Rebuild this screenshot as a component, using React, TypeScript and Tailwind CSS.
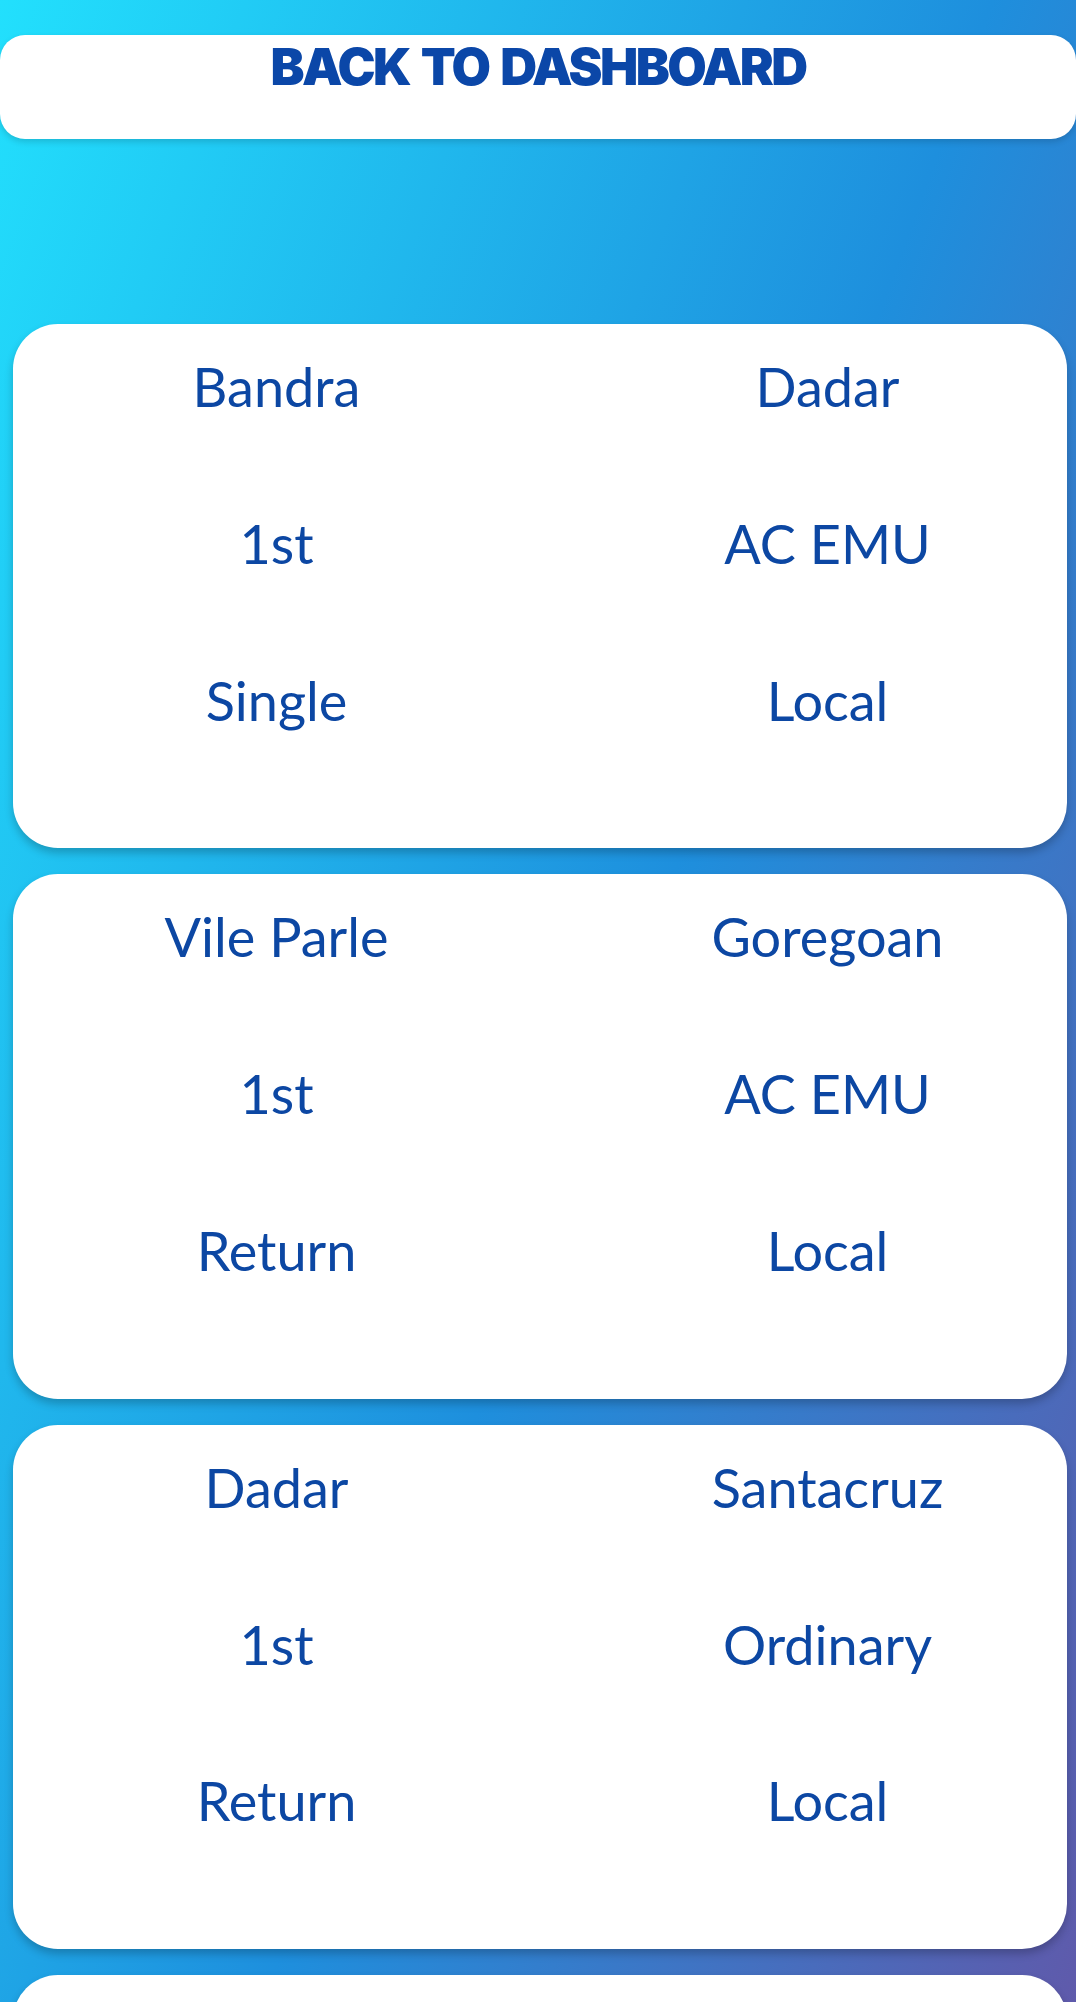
const tickets = [
  { from: "Bandra", to: "Dadar", cls: "1st", train: "AC EMU", type: "Single", mode: "Local" },
  { from: "Vile Parle", to: "Goregoan", cls: "1st", train: "AC EMU", type: "Return", mode: "Local" },
  { from: "Dadar", to: "Santacruz", cls: "1st", train: "Ordinary", type: "Return", mode: "Local" },
];

function TicketCard({ t }: { t: (typeof tickets)[number] }) {
  const cells = [t.from, t.to, t.cls, t.train, t.type, t.mode];
  return (
    <div className="grid grid-cols-2 gap-y-[92px] rounded-[45px] bg-white pt-[31px] pb-[115px] shadow-[0_5px_8px_rgba(0,0,0,0.22)]">
      {cells.map((c, i) => (
        <div
          key={i}
          className={`text-center text-[54px] leading-[1.2] text-[#0c47a3] ${i % 2 === 1 ? "pl-[48px]" : ""}`}
        >
          {c}
        </div>
      ))}
    </div>
  );
}

export default function App() {
  return (
    <div
      className="h-screen overflow-hidden bg-[linear-gradient(110deg,#22e0fd_0%,#1e8fdd_55%,#5f5aab_100%)]"
      style={{ fontFamily: "Lato, 'Open Sans', sans-serif" }}
    >
      <div className="pt-[35px]">
        <button className="block h-[104px] w-full rounded-[25px] bg-white pt-[6px] shadow-[0_3px_6px_rgba(0,0,0,0.15)]">
          <div className="h-full text-center font-[Inter] text-[51px] font-black leading-none tracking-[-0.05em] text-[#0b47a8] [word-spacing:4px]">
            BACK TO DASHBOARD
          </div>
        </button>
      </div>

      <div className="mt-[185px] flex flex-col gap-[26px] pr-[9px] pl-[13px]">
        {tickets.map((t, i) => (
          <TicketCard key={i} t={t} />
        ))}
        {/* next ticket, scrolled below the fold */}
        <div className="h-[523px] rounded-[45px] bg-white shadow-[0_5px_8px_rgba(0,0,0,0.22)]" />
      </div>
    </div>
  );
}
